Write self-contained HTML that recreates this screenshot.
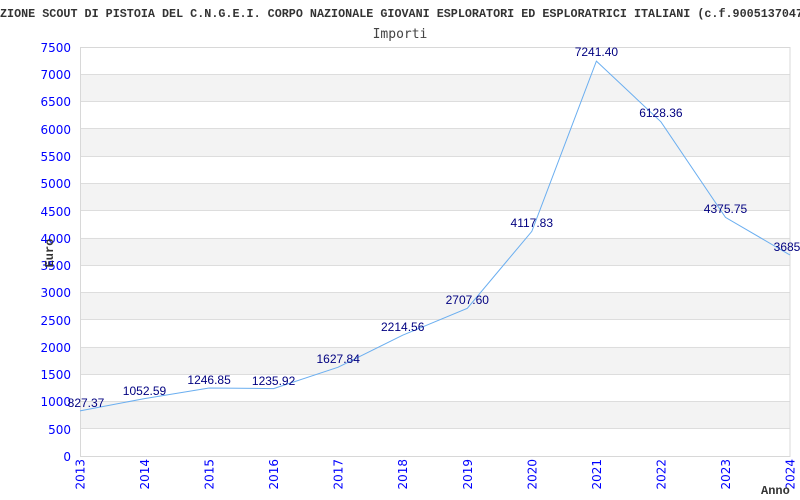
<!DOCTYPE html>
<html><head><meta charset="utf-8"><style>
html,body{margin:0;padding:0;background:#fff;width:800px;height:500px;overflow:hidden}
svg{display:block}
</style></head><body>
<svg width="800" height="500" xmlns="http://www.w3.org/2000/svg">
<rect width="800" height="500" fill="#fff"/>
<text x="0" y="17" textLength="803" lengthAdjust="spacingAndGlyphs" font-family="Liberation Mono, monospace" font-weight="bold" font-size="12" fill="#333">ZIONE SCOUT DI PISTOIA DEL C.N.G.E.I. CORPO NAZIONALE GIOVANI ESPLORATORI ED ESPLORATRICI ITALIANI (c.f.9005137047</text>
<text x="400" y="38" text-anchor="middle" font-family="DejaVu Sans Mono, monospace" font-size="13" fill="#444">Importi</text>
<g fill="#f3f3f3">
<rect x="80" y="74.3" width="710" height="27.3"/>
<rect x="80" y="128.8" width="710" height="27.3"/>
<rect x="80" y="183.3" width="710" height="27.3"/>
<rect x="80" y="237.9" width="710" height="27.3"/>
<rect x="80" y="292.4" width="710" height="27.3"/>
<rect x="80" y="346.9" width="710" height="27.3"/>
<rect x="80" y="401.5" width="710" height="27.3"/>
</g>
<g stroke="#ddd" stroke-width="1">
<line x1="80" x2="790" y1="74.5" y2="74.5"/><line x1="80" x2="790" y1="101.5" y2="101.5"/>
<line x1="80" x2="790" y1="128.5" y2="128.5"/><line x1="80" x2="790" y1="156.5" y2="156.5"/>
<line x1="80" x2="790" y1="183.5" y2="183.5"/><line x1="80" x2="790" y1="210.5" y2="210.5"/>
<line x1="80" x2="790" y1="238.5" y2="238.5"/><line x1="80" x2="790" y1="265.5" y2="265.5"/>
<line x1="80" x2="790" y1="292.5" y2="292.5"/><line x1="80" x2="790" y1="319.5" y2="319.5"/>
<line x1="80" x2="790" y1="347.5" y2="347.5"/><line x1="80" x2="790" y1="374.5" y2="374.5"/>
<line x1="80" x2="790" y1="401.5" y2="401.5"/><line x1="80" x2="790" y1="428.5" y2="428.5"/>
</g>
<rect x="80.5" y="47.5" width="709.5" height="409" fill="none" stroke="#d8d8d8"/>
<g font-family="DejaVu Sans, sans-serif" font-size="12" fill="#0000ff" text-anchor="end">
<text x="71" y="52">7500</text><text x="71" y="79">7000</text><text x="71" y="106">6500</text>
<text x="71" y="134">6000</text><text x="71" y="161">5500</text><text x="71" y="188">5000</text>
<text x="71" y="216">4500</text><text x="71" y="243">4000</text><text x="71" y="270">3500</text>
<text x="71" y="297">3000</text><text x="71" y="325">2500</text><text x="71" y="352">2000</text>
<text x="71" y="379">1500</text><text x="71" y="406">1000</text><text x="71" y="434">500</text>
<text x="71" y="461">0</text>
</g>
<g font-family="DejaVu Sans, sans-serif" font-size="12" fill="#0000ff" text-anchor="end">
<text transform="translate(84.5,459) rotate(-90)">2013</text>
<text transform="translate(149,459) rotate(-90)">2014</text>
<text transform="translate(213.6,459) rotate(-90)">2015</text>
<text transform="translate(278.1,459) rotate(-90)">2016</text>
<text transform="translate(342.7,459) rotate(-90)">2017</text>
<text transform="translate(407.2,459) rotate(-90)">2018</text>
<text transform="translate(471.8,459) rotate(-90)">2019</text>
<text transform="translate(536.3,459) rotate(-90)">2020</text>
<text transform="translate(600.9,459) rotate(-90)">2021</text>
<text transform="translate(665.4,459) rotate(-90)">2022</text>
<text transform="translate(730,459) rotate(-90)">2023</text>
<text transform="translate(794.5,459) rotate(-90)">2024</text>
</g>
<text transform="translate(53,253) rotate(-90)" text-anchor="middle" font-family="Liberation Mono, monospace" font-weight="bold" font-size="12" fill="#333">Euro</text>
<text x="761" y="494" font-family="Liberation Mono, monospace" font-weight="bold" font-size="12" fill="#333">Anno</text>
<polyline fill="none" stroke="#6aaef0" stroke-width="1" points="80,410.9 144.5,398.6 209.1,388 273.6,388.6 338.2,367.2 402.7,335.2 467.3,308.3 531.8,231.4 596.4,61.1 660.9,121.8 725.5,217.4 790,255"/>
<g font-family="Liberation Sans, sans-serif" font-size="12" fill="#000080" text-anchor="middle">
<text x="86" y="407">827.37</text>
<text x="144.5" y="395">1052.59</text>
<text x="209.1" y="384">1246.85</text>
<text x="273.6" y="385">1235.92</text>
<text x="338.2" y="363">1627.84</text>
<text x="402.7" y="331">2214.56</text>
<text x="467.3" y="304">2707.60</text>
<text x="531.8" y="227">4117.83</text>
<text x="596.4" y="56">7241.40</text>
<text x="660.9" y="117">6128.36</text>
<text x="725.5" y="213">4375.75</text>
<text x="792" y="251">3685.1</text>
</g>
</svg>
</body></html>
